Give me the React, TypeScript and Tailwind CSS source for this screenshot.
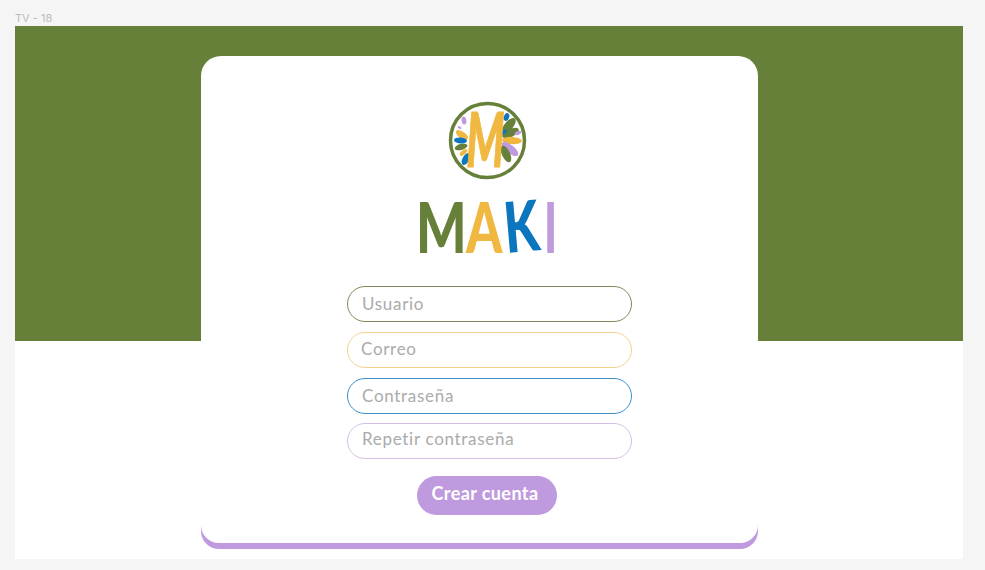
const fields = [
  { label: "Usuario", border: "border-[#84875a]", cls: "mt-0 pl-[14px] pb-[2px]" },
  { label: "Correo", border: "border-[#f3d290]", cls: "mt-[10px] pl-[13px] pb-[4px]" },
  { label: "Contraseña", border: "border-[#3b8fc4]", cls: "mt-[10px] pl-[14px] pb-[2px]" },
  { label: "Repetir contraseña", border: "border-[#d6bfe4]", cls: "mt-[9px] pl-[14px] pb-[5px]" },
];

// x, y, length, width, angle of each petal in the emblem
const petals = [
  { x: 59.5, y: 17, l: 4, w: 2.6, a: -70, c: "#0b75bd" },
  { x: 62, y: 25.5, l: 9, w: 4.4, a: -50, c: "#66803a" },
  { x: 63.5, y: 33, l: 9, w: 4, a: -25, c: "#66803a" },
  { x: 57, y: 32, l: 3.5, w: 2, a: -40, c: "#0b75bd" },
  { x: 71, y: 33, l: 3.5, w: 1.8, a: -20, c: "#c09ade" },
  { x: 65, y: 40.5, l: 10, w: 3.6, a: 3, c: "#f0b840" },
  { x: 63, y: 49, l: 10, w: 4.2, a: 38, c: "#c09ade" },
  { x: 59, y: 54, l: 9, w: 4, a: 65, c: "#66803a" },
  { x: 17, y: 20.5, l: 4, w: 2.4, a: 80, c: "#c09ade" },
  { x: 12.5, y: 27.5, l: 2, w: 1.2, a: 30, c: "#c09ade" },
  { x: 15, y: 35, l: 7, w: 3.4, a: 35, c: "#f0b840" },
  { x: 13.5, y: 40.5, l: 6.5, w: 3, a: 5, c: "#0b75bd" },
  { x: 14, y: 47, l: 6.5, w: 3, a: -15, c: "#66803a" },
  { x: 16.5, y: 52.5, l: 4.5, w: 2.2, a: -40, c: "#f0b840" },
  { x: 19, y: 59, l: 6.5, w: 3.4, a: -60, c: "#0b75bd" },
];

function Emblem() {
  return (
    <svg width="80" height="80" viewBox="0 0 80 80" className="ml-[-5px] overflow-visible">
      <circle cx="40.5" cy="40.5" r="37" fill="#fff" stroke="#66803a" strokeWidth="3.5" />
      {petals.map((p, i) => (
        <ellipse key={i} cx={p.x} cy={p.y} rx={p.l} ry={p.w} fill={p.c} transform={`rotate(${p.a} ${p.x} ${p.y})`} />
      ))}
      <text
        x="0"
        y="0"
        fill="#f0b840"
        stroke="#f0b840"
        strokeWidth="0.8"
        fontFamily="Lato, sans-serif"
        fontWeight="900"
        fontSize="54"
        fontStyle="italic"
        textAnchor="middle"
        transform="translate(38.5 66.5) scale(0.8 1.42)"
      >
        M
      </text>
    </svg>
  );
}

export default function App() {
  return (
    <div className="h-[570px] w-[985px] overflow-hidden bg-[#f5f5f5] font-['Lato',sans-serif]">
      <div className="h-[26px] pl-[15px] pt-[12px] font-['Inter',sans-serif] text-[11px] leading-[12px] text-[#bdbdbd]">
        TV - 18
      </div>
      <div className="ml-[15px] h-[533px] w-[948px] bg-[linear-gradient(#66803a_315px,#ffffff_315px)] pl-[186px] pt-[30px]">
        <div className="flex h-[487px] w-[557px] flex-col items-center rounded-b-[18px] rounded-t-[20px] bg-white pl-[20px] pt-[44px] shadow-[0_6px_0_#c09ade]">
          <Emblem />
          <div className="ml-[-4px] mt-[14px] flex h-[65px] w-[138px] items-center text-[70px] font-black leading-[65px]">
            <span className="ml-[-3px] flex w-[50px] origin-left scale-x-[0.76] text-[#66803a]">M</span>
            <span className="flex w-[38px] origin-left scale-x-[0.74] text-[#f0b840]">A</span>
            <span className="flex w-[40px] origin-left rotate-[-5deg] scale-x-[0.72] text-[#0b75bd]">K</span>
            <span className="flex w-[10px] origin-left scale-x-[0.62] text-[#c09ade]">I</span>
          </div>
          <form className="mt-[27px] flex w-[285px] flex-col">
            {fields.map((f) => (
              <input
                key={f.label}
                placeholder={f.label}
                className={`h-[36px] w-full rounded-[18px] border bg-white text-[17px] tracking-[0.7px] placeholder:text-[#ababab] ${f.border} ${f.cls}`}
              />
            ))}
          </form>
          <button className="ml-[-6px] mt-[17px] h-[39px] w-[140px] rounded-[20px] bg-[#c09ade] pb-[4px] pr-[3px] text-[18px] font-bold tracking-[0.4px] text-white">
            Crear cuenta
          </button>
        </div>
      </div>
    </div>
  );
}
